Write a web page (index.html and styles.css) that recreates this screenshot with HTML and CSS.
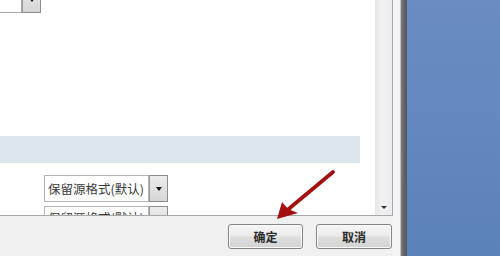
FILE: index.html
```html
<!DOCTYPE html>
<html lang="zh">
<head>
<meta charset="utf-8">
<link rel="stylesheet" href="styles.css">
</head>
<body>
<div class="screen">
  <div class="dialog">
    <div class="scrollarea">
      <div class="content">
        <div class="combo combo-top">
          <div class="combo-text"></div>
          <div class="combo-btn"><span class="tri"></span></div>
        </div>
        <div class="band"></div>
        <div class="combo combo-a">
          <div class="combo-text">保留源格式(默认)</div>
          <div class="combo-btn"><span class="tri"></span></div>
        </div>
        <div class="combo combo-b">
          <div class="combo-text">保留源格式(默认)</div>
          <div class="combo-btn"></div>
        </div>
      </div>
      <div class="scrollbar"><span class="sb-tri"></span></div>
    </div>
    <div class="footer">
      <button class="btn">确定</button>
      <button class="btn">取消</button>
    </div>
  </div>
  <div class="winborder"></div>
  <div class="desktop"></div>
  <svg class="arrow" width="500" height="256" viewBox="0 0 500 256">
    <line x1="333" y1="172" x2="285" y2="212" stroke="#a3100f" stroke-width="3.8" stroke-linecap="round"/>
    <polygon points="277,219 282,202 288,209 298,213" fill="#a3100f"/>
  </svg>
</div>
</body>
</html>
```
FILE: styles.css
```css
* { box-sizing: border-box; }
html, body { margin: 0; padding: 0; }
body {
  width: 500px;
  height: 256px;
  overflow: hidden;
  background: #fff;
  font-family: "Noto Sans CJK SC", "Liberation Sans", sans-serif;
}
.screen {
  position: relative;
  display: flex;
  width: 500px;
  height: 256px;
}
.dialog {
  flex: 0 0 400px;
  display: flex;
  flex-direction: column;
  background: #f4f4f6;
  padding-right: 7px;
  border-right: 1px solid #c4c4c6;
}
.scrollarea {
  height: 215px;
  display: flex;
  border-right: 1px solid #a9a9ab;
  background: #fff;
}
.content {
  width: 375px;
  height: 215px;
  overflow: hidden;
  background: #fff;
}
.combo {
  display: flex;
  height: 27px;
}
.combo-text {
  width: 105px;
  height: 27px;
  border: 1px solid #b4b4b4;
  background: #fff;
  font-size: 12.5px;
  line-height: 25px;
  color: #3a3a3a;
  padding-left: 3px;
  white-space: nowrap;
  overflow: hidden;
}
.combo-btn {
  width: 19px;
  height: 27px;
  border: 1px solid #8c8c8c;
  border-left: 1px solid #9a9a9a;
  background: linear-gradient(#ececec, #d6d6d6);
  display: flex;
  align-items: center;
  justify-content: center;
}
.tri {
  width: 0;
  height: 0;
  border-left: 3.5px solid transparent;
  border-right: 3.5px solid transparent;
  border-top: 4px solid #111;
}
.combo-top {
  margin-top: -14px;
  margin-left: -83px;
}
.combo-top .combo-text { border-color: #a8a8a8; }
.band {
  margin-top: 123px;
  width: 360px;
  height: 27px;
  background: #dde6ee;
}
.combo-a {
  margin-top: 12px;
  margin-left: 44px;
}
.combo-b {
  margin-top: 4px;
  margin-left: 44px;
}
.combo-b .combo-text { line-height: 21px; }
.scrollbar {
  width: 17px;
  height: 215px;
  background: linear-gradient(90deg, #e6e6ea, #f2f2f4 40%, #ececef);
  display: flex;
  align-items: flex-end;
  justify-content: center;
  padding-bottom: 6px;
}
.sb-tri {
  width: 0;
  height: 0;
  border-left: 3px solid transparent;
  border-right: 3px solid transparent;
  border-top: 3px solid #333;
}
.footer {
  flex: 1;
  display: flex;
  justify-content: flex-end;
  align-items: flex-start;
  gap: 13px;
  padding-top: 8px;
  padding-right: 1px;
  background: #f0f0f0;
  border-top: 1px solid #a8a8a8;
}
.btn {
  width: 75px;
  height: 25px;
  border: 1px solid #858585;
  border-radius: 3px;
  background: linear-gradient(#f6f6f6 0%, #ebebeb 45%, #dddddd 55%, #d3d3d3 100%);
  font-family: "Noto Sans CJK SC", sans-serif;
  font-size: 12px;
  font-weight: bold;
  color: #2a2a2a;
  padding: 0;
  line-height: 23px;
  box-shadow: inset 0 0 0 1px #fbfbfb;
}
.btn + .btn { width: 76px; }
.winborder {
  flex: 0 0 6px;
  background: linear-gradient(90deg, #7c7c7c, #5c5c5c 70%, #4a5a78);
}
.desktop {
  flex: 1;
  background: linear-gradient(#6a8cc3, #5c82ba);
}
.arrow {
  position: absolute;
  left: 0;
  top: 0;
  pointer-events: none;
}
```
